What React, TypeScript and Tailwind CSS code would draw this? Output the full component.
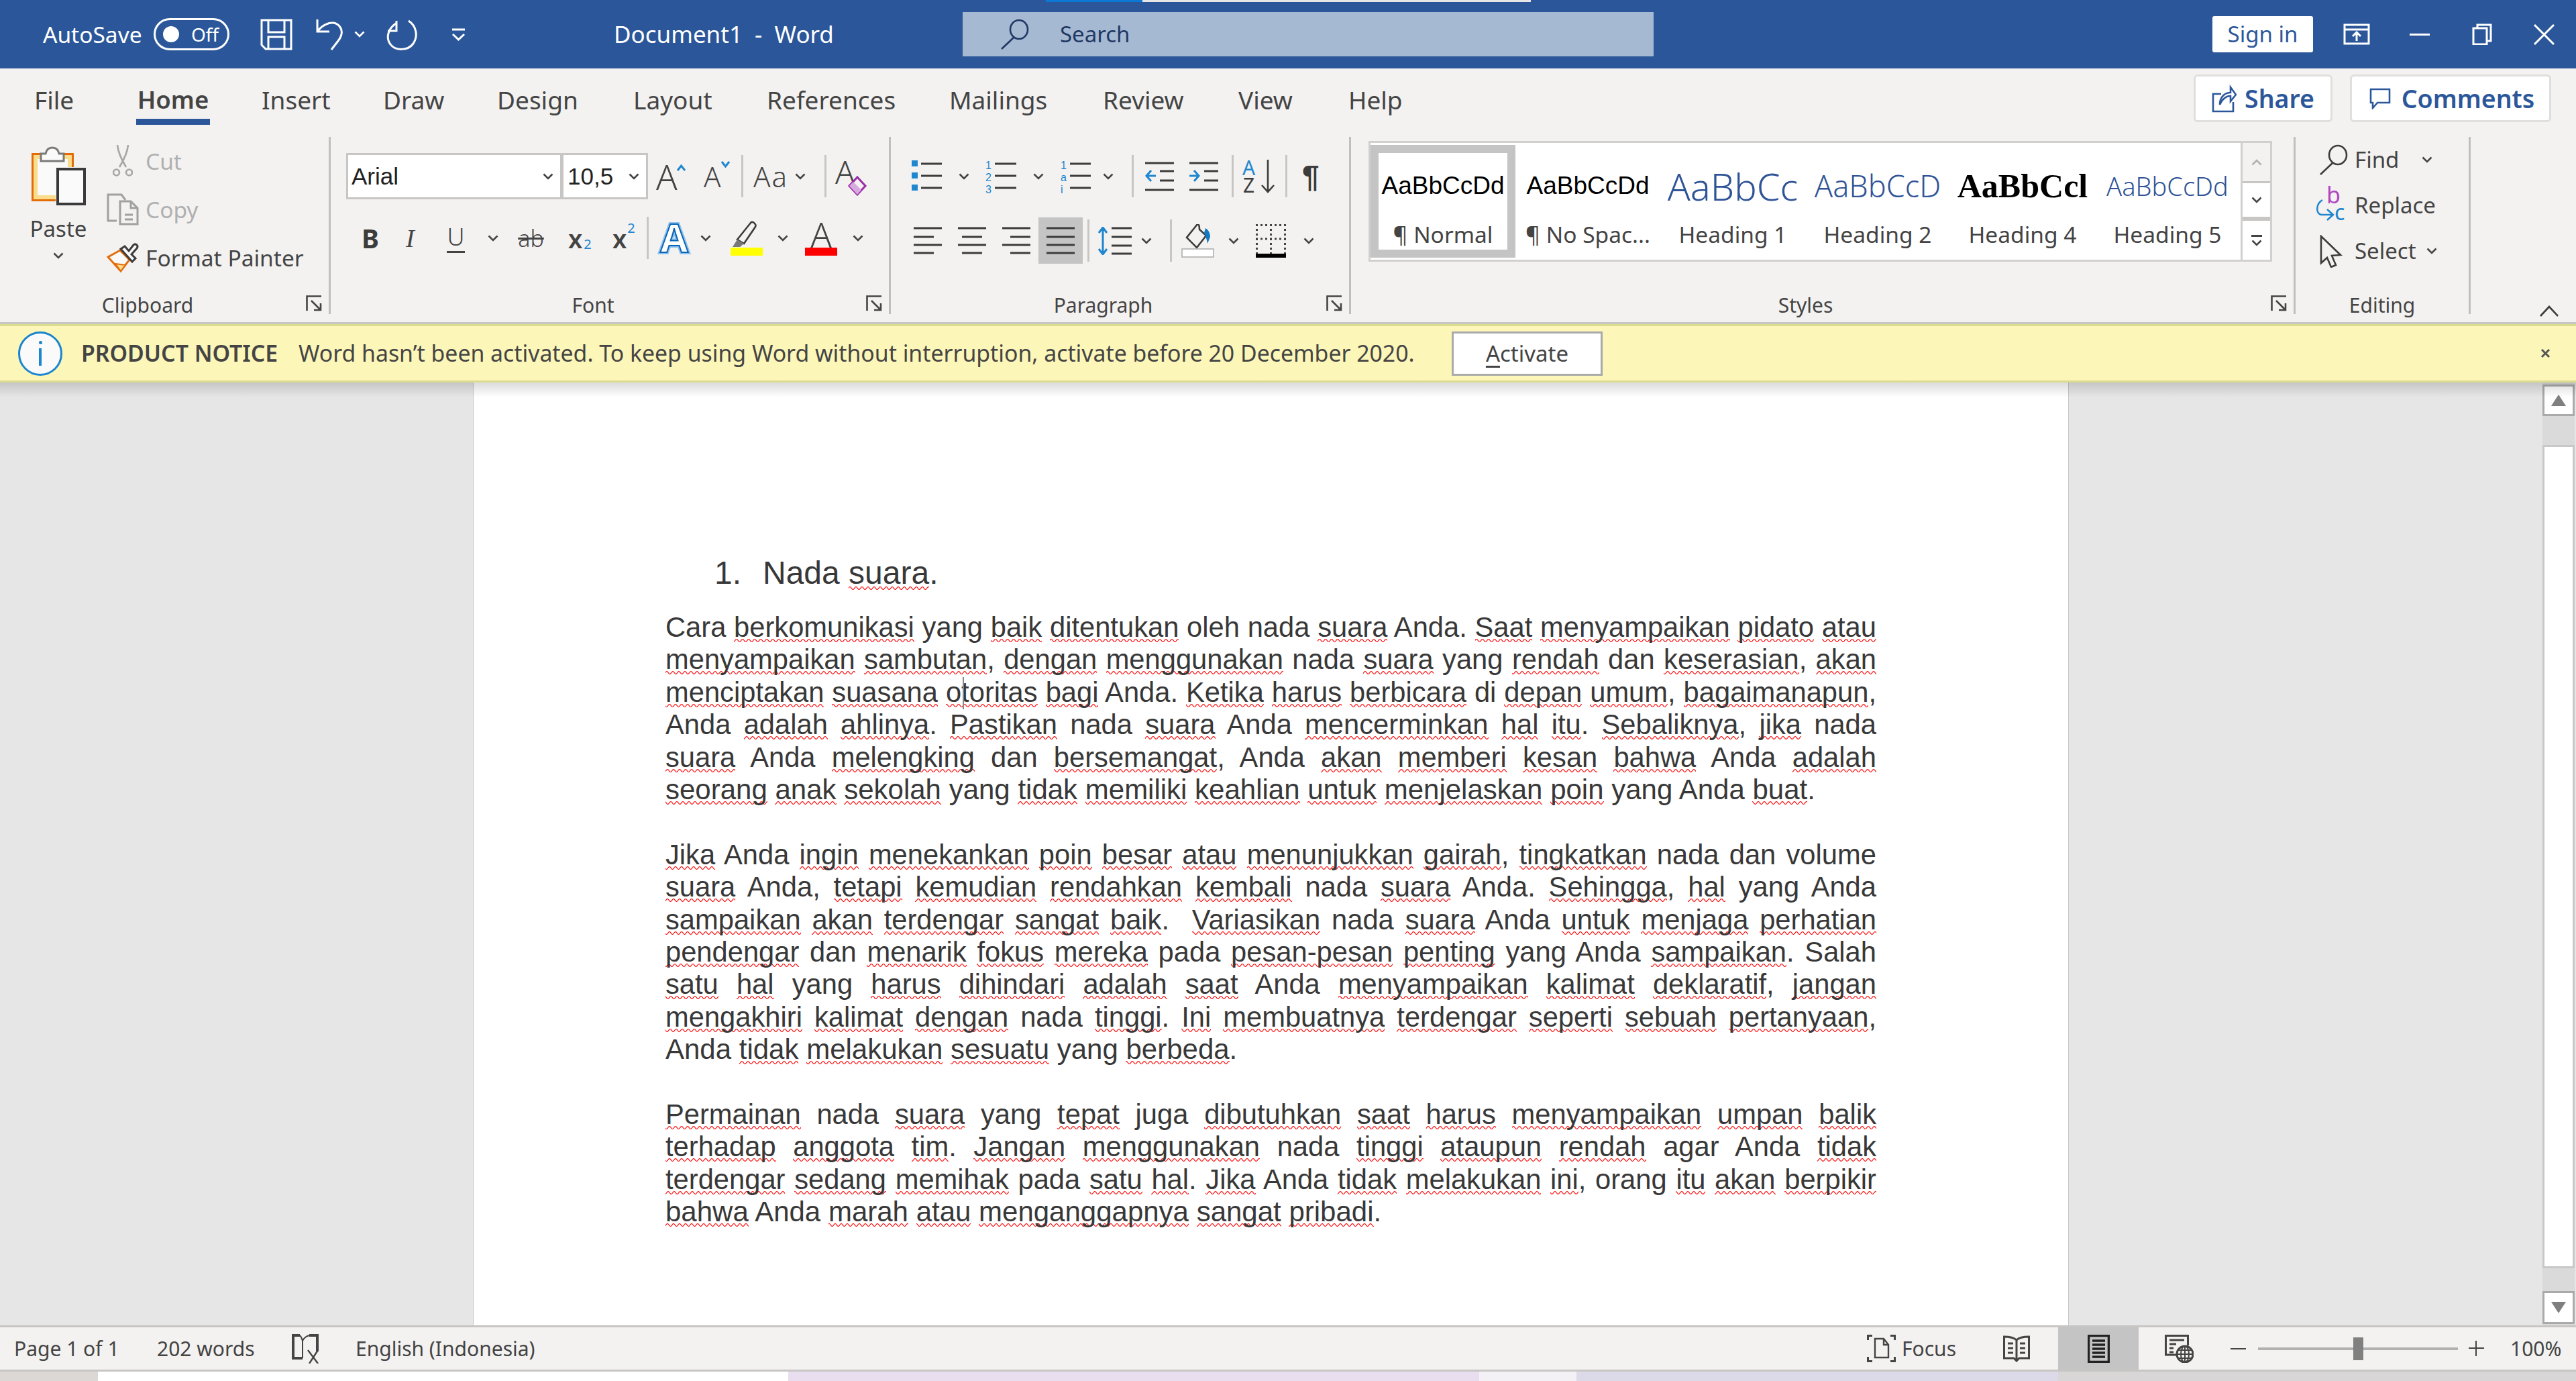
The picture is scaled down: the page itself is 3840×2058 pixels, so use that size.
import React from 'react';

const INK = '#444444';

const Chev = ({ className = '', color = INK }: { className?: string; color?: string }) => (
  <svg className={`shrink-0 ${className}`} width="16" height="10" viewBox="0 0 16 10" fill="none" stroke={color} strokeWidth="2.6">
    <path d="M1.5 1.5L8 8l6.5-6.5" />
  </svg>
);

const Sep = ({ className = '' }: { className?: string }) => <div className={`h-[63px] w-[3px] shrink-0 bg-[#c8c6c4] ${className}`} />;

const Launcher = () => (
  <svg className="absolute right-[10px] top-[4px]" width="24" height="24" viewBox="0 0 24 24" fill="none" stroke={INK} strokeWidth="2.6">
    <path d="M1.5 23V1.5H23M8 8l14 14M22 12v10H12" />
  </svg>
);

const Lens = ({ color, className = '' }: { color: string; className?: string }) => (
  <svg className={`shrink-0 ${className}`} width="45" height="46" viewBox="0 0 45 46" fill="none" stroke={color} strokeWidth="2.6">
    <ellipse cx="29" cy="16" rx="13" ry="14" />
    <path d="M21 28L3 45" />
  </svg>
);

const Group = ({ label, launcher, width, children, noPad }: { label: string; launcher?: boolean; width: string; children: React.ReactNode; noPad?: boolean }) => (
  <div className={`relative flex h-[264px] shrink-0 flex-col border-r-[3px] border-[#c0bfbd] ${width}`}>
    <div className="flex-1">{children}</div>
    <div className={`relative -mb-[6px] flex h-[38px] items-center justify-center text-[30px] leading-none ${noPad ? '' : 'pr-[50px]'}`}>
      {label}
      {launcher && <Launcher />}
    </div>
  </div>
);

const Lines = ({ kind }: { kind: 'left' | 'center' | 'right' | 'full' }) => {
  const rows = [336, 349, 361, 373].map((y, i) => {
    const short = i % 2 === 1;
    let x1 = 0;
    let x2 = 42;
    if (short && kind === 'left') x2 = 30;
    if (short && kind === 'center') { x1 = 6; x2 = 36; }
    if (short && kind === 'right') x1 = 12;
    return <path key={y} d={`M${x1} ${y - 334}H${x2}`} />;
  });
  return <svg className="shrink-0" width="42" height="42" viewBox="0 0 42 42" fill="none" stroke="#3c3c3c" strokeWidth="3">{rows}</svg>;
};

function PasteIcon() {
  return (
    <svg width="81" height="90" viewBox="0 0 81 90">
      <rect x="1.5" y="13.5" width="60" height="69" fill="#f9dc8c" stroke="#e36c09" strokeWidth="3" />
      <rect x="9" y="21" width="45" height="54" fill="#fafafa" />
      <path d="M14 24V13h7c1-5 4-9 10-9s9 4 10 9h7v11z" fill="#fafafa" stroke="#7a7a78" strokeWidth="3" />
      <rect x="36" y="33" width="45" height="57" fill="#f3f2f1" />
      <rect x="39" y="36" width="40" height="52" fill="#fafafa" stroke="#3a3a3a" strokeWidth="4" />
    </svg>
  );
}

function CutIcon() {
  return (
    <svg width="30" height="48" viewBox="0 0 30 48" fill="none" stroke="#a6a6a6" strokeWidth="2.6">
      <path d="M7 0c1 10 5 20 13 33M23 0c-1 10-5 20-13 33" />
      <circle cx="5.5" cy="41" r="4.5" />
      <circle cx="24.5" cy="41" r="4.5" />
    </svg>
  );
}

function CopyIcon() {
  return (
    <svg width="48" height="48" viewBox="0 0 48 48" fill="none" stroke="#a0a0a0" strokeWidth="3">
      <path d="M15 41H2V2h20l6 8" />
      <path d="M20 12h16l10 10v24H20z" fill="#f3f2f1" />
      <path d="M36 12v10h10M27 32h12M27 39h12" />
    </svg>
  );
}

function PainterIcon() {
  return (
    <svg width="48" height="46" viewBox="0 0 48 46" fill="none">
      <path d="M2 22l18-10 14 14-13 17z" fill="#f9f9f9" stroke="#e36c09" strokeWidth="3" />
      <path d="M13 32l15 2-7 9z" fill="#f9dc8c" stroke="#e36c09" strokeWidth="2" />
      <path d="M21 10l6-4 6 7 7-9c3-3 8 1 5 5l-8 9 6 6-5 5z" fill="#f9f9f9" stroke="#3c3c3c" strokeWidth="3" />
    </svg>
  );
}

function Bullets() {
  return (
    <svg className="shrink-0" width="45" height="47" viewBox="0 0 45 47" fill="none">
      <g fill="#2086cf"><rect x="0" y="0" width="9" height="9" /><rect x="0" y="18" width="9" height="9" /><rect x="0" y="36" width="9" height="9" /></g>
      <path d="M14 5h31M14 23h31M14 41h31" stroke="#3c3c3c" strokeWidth="3" />
    </svg>
  );
}

function Numbered({ labels, w }: { labels: string[]; w: number }) {
  return (
    <svg className="shrink-0 overflow-visible" width={w} height="56" viewBox={`0 0 ${w} 56`} fill="none">
      <g fill="#2086cf" fontFamily="Liberation Sans, sans-serif" fontSize="16">
        <text x="0" y="17">{labels[0]}</text>
        <text x="0" y="35">{labels[1]}</text>
        <text x="0" y="53">{labels[2]}</text>
      </g>
      <path d={`M14 9H${w}M14 27H${w}M14 45H${w}`} stroke="#3c3c3c" strokeWidth="3" />
    </svg>
  );
}

function Indent({ out }: { out?: boolean }) {
  return (
    <svg className="shrink-0" width="43" height="44" viewBox="0 0 43 44" fill="none" stroke="#3c3c3c" strokeWidth="3">
      <path d="M0 2h43M22 14h21M22 28h21M0 42h43" />
      {out ? <path d="M16 21H2M9 13l-7 8 7 8" stroke="#2086cf" /> : <path d="M0 21h14M7 13l7 8-7 8" stroke="#2086cf" />}
    </svg>
  );
}

function SortIcon() {
  return (
    <div className="relative h-[50px] w-[49px] shrink-0 text-[30px] leading-[24px]">
      <span className="absolute left-0 top-0 text-[#2086cf]">A</span>
      <span className="absolute left-[1px] top-[26px] text-[#3c3c3c]">Z</span>
      <svg className="absolute right-0 top-0" width="22" height="50" viewBox="0 0 22 50" fill="none" stroke="#3c3c3c" strokeWidth="2.6">
        <path d="M11 0v48M2 38l9 10 9-10" />
      </svg>
    </div>
  );
}

function SpacingIcon() {
  return (
    <svg className="shrink-0" width="50" height="42" viewBox="0 0 50 42" fill="none">
      <path d="M20 2h30M20 15h30M20 28h30M20 40h30" stroke="#3c3c3c" strokeWidth="3" />
      <path d="M7 2v38M1 9l6-8 6 8M1 33l6 8 6-8" stroke="#2086cf" strokeWidth="3" />
    </svg>
  );
}

function ShadingIcon() {
  return (
    <svg className="shrink-0" width="49" height="50" viewBox="0 0 49 50" fill="none">
      <path d="M24 0c2 0 3 3 3 8l10 9-14 18L8 20z" stroke="#3c3c3c" strokeWidth="2.6" fill="#f3f2f1" />
      <path d="M36 6c4 2 7 7 7 13l-4 10c-1-6-3-12-5-16z" fill="#1279c4" />
      <rect x="1" y="37" width="47" height="12" fill="#fff" stroke="#b0b0b0" strokeWidth="1.6" />
    </svg>
  );
}

function BordersIcon() {
  return (
    <svg className="shrink-0" width="45" height="50" viewBox="0 0 45 50" fill="none">
      <path d="M1.5 0v44M43.5 0v44M0 1.5h45M22.5 0v44M0 22h45" stroke="#444" strokeWidth="3" strokeDasharray="3 4" />
      <rect x="0" y="44" width="45" height="6" fill="#000" />
    </svg>
  );
}

function ReplaceIcon() {
  return (
    <div className="relative h-[48px] w-[45px] shrink-0 leading-[24px]">
      <span className="absolute left-[16px] top-[-4px] text-[34px] text-[#b146c2]">b</span>
      <span className="absolute left-[28px] top-[22px] text-[32px] text-[#2086cf]">c</span>
      <svg className="absolute left-0 top-[14px]" width="30" height="34" viewBox="0 0 30 34" fill="none" stroke="#2086cf" strokeWidth="2.6">
        <path d="M10 2C0 8 0 22 8 24h18M17 16l9 8-9 8" />
      </svg>
    </div>
  );
}

function SelectIcon() {
  return (
    <svg className="shrink-0" width="34" height="49" viewBox="0 0 34 49" fill="none" stroke="#3c3c3c" strokeWidth="2.6">
      <path d="M2 2v40l9-8 6 14 7-3-6-14 13-1z" />
    </svg>
  );
}

// x positions read off the reference: each tab has its own cell
const RibbonTabs = [
  { name: 'Insert', cell: 'ml-[77px] w-[99px]' },
  { name: 'Draw', cell: 'ml-[82px] w-[89px]' },
  { name: 'Design', cell: 'ml-[81px] w-[121px]' },
  { name: 'Layout', cell: 'ml-[82px] w-[116px]' },
  { name: 'References', cell: 'ml-[83px] w-[191px]' },
  { name: 'Mailings', cell: 'ml-[81px] w-[148px]' },
  { name: 'Review', cell: 'ml-[81px] w-[122px]' },
  { name: 'View', cell: 'ml-[80px] w-[85px]' },
  { name: 'Help', cell: 'ml-[79px] w-[81px]' },
];

function StylePreview({ label, className, text, selected }: { label: string; className: string; text: string; selected?: boolean }) {
  return (
    <div className={`flex h-[168px] w-[216px] shrink-0 flex-col items-center border-[12px] ${selected ? 'border-[#c4c4c4]' : 'border-transparent'}`}>
      <div className="flex h-[98px] w-[190px] items-center justify-center whitespace-nowrap">
        <span className={className}>{text}</span>
      </div>
      <div className="whitespace-nowrap text-[33.500px] leading-[46px]">{label}</div>
    </div>
  );
}

const SPELL_OK = new Set(['Cara', 'yang', 'oleh', 'nada', 'Anda', 'dan', 'di', 'orang', 'volume', 'Salah', 'juga', 'agar', 'pada', 'Nada']);

function Words({ text }: { text: string }) {
  const parts = text.split(/([A-Za-z-]+)/);
  return (
    <>
      {parts.map((p, i) =>
        /^[A-Za-z-]+$/.test(p) && !SPELL_OK.has(p) ? (
          <span key={i} className="bg-[url(data:image/svg+xml,%3Csvg%20xmlns=%27http://www.w3.org/2000/svg%27%20width=%279%27%20height=%277%27%3E%3Cpath%20d=%27M0%201.5C2%201.5%202.5%205.5%204.5%205.5S7%201.5%209%201.5%27%20fill=%27none%27%20stroke=%27%23f00%27%20stroke-width=%271.2%27/%3E%3C/svg%3E)] bg-[length:9px_7px] bg-bottom bg-repeat-x">{p}</span>
        ) : (
          <span key={i}>{p}</span>
        ),
      )}
    </>
  );
}

const PARAS = [
  [
    'Cara berkomunikasi yang baik ditentukan oleh nada suara Anda. Saat menyampaikan pidato atau',
    'menyampaikan sambutan, dengan menggunakan nada suara yang rendah dan keserasian, akan',
    'menciptakan suasana otoritas bagi Anda. Ketika harus berbicara di depan umum, bagaimanapun,',
    'Anda adalah ahlinya. Pastikan nada suara Anda mencerminkan hal itu. Sebaliknya, jika nada',
    'suara Anda melengking dan bersemangat, Anda akan memberi kesan bahwa Anda adalah',
    'seorang anak sekolah yang tidak memiliki keahlian untuk menjelaskan poin yang Anda buat.',
  ],
  [
    'Jika Anda ingin menekankan poin besar atau menunjukkan gairah, tingkatkan nada dan volume',
    'suara Anda, tetapi kemudian rendahkan kembali nada suara Anda. Sehingga, hal yang Anda',
    'sampaikan akan terdengar sangat baik.\u00a0 Variasikan nada suara Anda untuk menjaga perhatian',
    'pendengar dan menarik fokus mereka pada pesan-pesan penting yang Anda sampaikan. Salah',
    'satu hal yang harus dihindari adalah saat Anda menyampaikan kalimat deklaratif, jangan',
    'mengakhiri kalimat dengan nada tinggi. Ini membuatnya terdengar seperti sebuah pertanyaan,',
    'Anda tidak melakukan sesuatu yang berbeda.',
  ],
  [
    'Permainan nada suara yang tepat juga dibutuhkan saat harus menyampaikan umpan balik',
    'terhadap anggota tim. Jangan menggunakan nada tinggi ataupun rendah agar Anda tidak',
    'terdengar sedang memihak pada satu hal. Jika Anda tidak melakukan ini, orang itu akan berpikir',
    'bahwa Anda marah atau menganggapnya sangat pribadi.',
  ],
];

export default function App() {
  return (
    <div className="flex h-screen w-screen flex-col overflow-hidden bg-[#f3f2f1] font-['Noto_Sans',sans-serif] text-[#444444]">
      {/* title bar */}
      <header className="relative flex h-[102px] shrink-0 items-center whitespace-nowrap bg-[#2b579a] text-white">
        <div className="absolute left-[1559px] top-0 flex h-[3px] w-[723px]">
          <div className="w-[144px] bg-[#0a78d4]" />
          <div className="flex-1 bg-[#e6e6e6]" />
        </div>
        <span className="ml-[64px] w-[147px] text-[33.500px]">AutoSave</span>
        <div className="ml-[18px] flex h-[48px] w-[113px] items-center rounded-full border-[3px] border-white pl-[11px]">
          <div className="h-[24px] w-[24px] rounded-full bg-white" />
          <span className="ml-[18px] text-[28px] leading-none">Off</span>
        </div>
        <svg className="ml-[46px] shrink-0" width="48" height="47" viewBox="0 0 48 47" fill="none" stroke="#fff" strokeWidth="3">
          <path d="M2 2h44v43H8l-6-6zM12 2v18h24V2M12 45V27h24v18" />
        </svg>
        <svg className="ml-[34px] shrink-0" width="45" height="48" viewBox="0 0 45 48" fill="none" stroke="#fff" strokeWidth="3">
          <path d="M3 2v18h18M3 20C12 8 28 2 36 12c6 7 3 16-2 22L24 47" />
        </svg>
        <Chev color="#fff" className="ml-[13px]" />
        <svg className="ml-[31px] shrink-0" width="50" height="48" viewBox="0 0 50 48" fill="none" stroke="#fff" strokeWidth="3">
          <path d="M16 4v15H3M15 8C3 16 0 30 7 39c7 10 26 10 34-1 8-12 4-27-7-34" />
        </svg>
        <svg className="ml-[47px] shrink-0" width="23" height="19" viewBox="0 0 23 19" fill="none" stroke="#fff" strokeWidth="3">
          <path d="M2 2h19M3 9l8.500 8L20 9M2 2" />
        </svg>
        <span className="ml-[220px] w-[325px] text-[35px]">Document1&nbsp; -&nbsp; Word</span>
        <div className="ml-[195px] flex h-[66px] w-[1030px] items-center bg-[#a6b9d2] pl-[55px] text-[#1f3864]">
          <Lens color="#1f3864" />
          <span className="ml-[45px] text-[33px]">Search</span>
        </div>
        <div className="ml-[833px] flex h-[54px] w-[150px] items-center justify-center rounded-[3px] bg-white text-[33px] text-[#2b579a]">Sign in</div>
        <svg className="ml-[45px] shrink-0" width="40" height="32" viewBox="0 0 40 32" fill="none" stroke="#fff" strokeWidth="3">
          <path d="M2 2h36v28H2zM2 9h36M20 26V13M14 19l6-6 6 6" />
        </svg>
        <div className="ml-[59px] h-[3px] w-[30px] shrink-0 bg-white" />
        <svg className="ml-[63px] shrink-0" width="30" height="32" viewBox="0 0 30 32" fill="none" stroke="#fff" strokeWidth="3">
          <path d="M8 6V2h20v24h-6M2 7h20v24H2z" />
        </svg>
        <svg className="ml-[62px] shrink-0" width="31" height="31" viewBox="0 0 31 31" fill="none" stroke="#fff" strokeWidth="3">
          <path d="M1 1l29 29M30 1L1 30" />
        </svg>
      </header>

      {/* tab row */}
      <nav className="flex h-[98px] shrink-0 items-start whitespace-nowrap pl-[51px] text-[37px] leading-none">
        <div className="flex h-[84px] w-[56px] items-center border-b-[9px] border-transparent pt-[18px]">File</div>
        <div className="ml-[96px] flex h-[84px] w-[110px] items-center justify-center border-b-[9px] border-[#2b579a] pt-[18px] text-[36.500px] font-semibold">Home</div>
        {RibbonTabs.map((t) => (
          <div key={t.name} className={`flex h-[84px] items-center border-b-[9px] border-transparent pt-[18px] ${t.cell}`}>{t.name}</div>
        ))}
        <div className="ml-auto mt-[9px] flex gap-[26px] pr-[37px] text-[37.500px] font-semibold text-[#2b579a]">
          <div className="flex h-[71px] w-[207px] items-center justify-center rounded-[6px] border-[3px] border-[#e1dfdd] bg-white">
            <svg className="mr-[12px]" width="37" height="42" viewBox="0 0 37 42" fill="none" stroke="#2b579a" strokeWidth="2.6">
              <path d="M14 14H2v26h30V26M12 30C12 18 20 12 28 12V4l8 11-8 10v-8c-6 0-12 4-16 13z" />
            </svg>
            Share
          </div>
          <div className="flex h-[71px] w-[300px] items-center justify-center rounded-[6px] border-[3px] border-[#e1dfdd] bg-white pl-[4px]">
            <svg className="mr-[16px]" width="32" height="32" viewBox="0 0 32 32" fill="none" stroke="#2b579a" strokeWidth="2.6">
              <path d="M2 2h28v20H12l-7 8v-8H2z" />
            </svg>
            Comments
          </div>
        </div>
      </nav>

      {/* ribbon */}
      <section className="flex h-[280px] shrink-0 whitespace-nowrap pt-[4px]">
        <Group label="Clipboard" launcher width="w-[493px]">
          <div className="flex">
            <div className="ml-[12px] flex w-[150px] flex-col items-center pt-[12px] pr-[0px]">
              <PasteIcon />
              <div className="mt-[13px] text-[33px] leading-[44px]">Paste</div>
              <Chev className="mt-[13px]" />
            </div>
            <div className="flex flex-col text-[33.500px]">
              <div className="flex h-[72px] items-center text-[#b0b0b0]">
                <div className="flex w-[48px] -translate-x-[3px] justify-center"><CutIcon /></div>
                <span className="ml-[7px]">Cut</span>
              </div>
              <div className="flex h-[72px] items-center text-[#b0b0b0]">
                <div className="flex w-[48px] -translate-x-[3px] justify-center"><CopyIcon /></div>
                <span className="ml-[7px]">Copy</span>
              </div>
              <div className="flex h-[72px] items-center">
                <div className="flex w-[48px] -translate-x-[3px] justify-center"><PainterIcon /></div>
                <span className="ml-[7px]">Format Painter</span>
              </div>
            </div>
          </div>
        </Group>

        <Group label="Font" launcher width="w-[835px]">
          <div className="flex h-[69px] items-center mt-[24px]">
            <div className="ml-[23px] flex h-[69px] w-[450px] border-[3px] border-[#c8c6c4] bg-white font-['Liberation_Sans',sans-serif] text-[35px] leading-none text-[#222]">
              <div className="flex w-[316px] items-center justify-between pl-[5px] pr-[10px]">Arial<Chev /></div>
              <div className="flex flex-1 items-center justify-between border-l-[5px] border-[#c8c6c4] pl-[6px] pr-[10px]">10,5<Chev /></div>
            </div>
            <div className="relative ml-[12px] flex w-[44px] shrink-0 font-light text-[52px] leading-none">A
              <svg className="absolute right-0 top-[8px]" width="13" height="10" viewBox="0 0 13 10" fill="none" stroke="#2086cf" strokeWidth="3"><path d="M1 9l5.500-7L12 9" /></svg>
            </div>
            <div className="relative ml-[27px] flex w-[39px] shrink-0 font-light text-[42px] leading-none">A
              <svg className="absolute right-0 top-[-2px]" width="13" height="10" viewBox="0 0 13 10" fill="none" stroke="#2086cf" strokeWidth="3"><path d="M1 1l5.500 7L12 1" /></svg>
            </div>
            <Sep className="ml-[17px]" />
            <span className="ml-[15px] w-[47px] shrink-0 font-light text-[42px] leading-none tracking-[2px]">Aa</span>
            <Chev className="ml-[15px]" />
            <Sep className="ml-[28px]" />
            <div className="relative ml-[13px] h-[50px] w-[48px] shrink-0 font-light text-[48px] leading-none">
              <span className="absolute left-0 top-[-6px]">A</span>
              <svg className="absolute bottom-[-4px] right-0" width="30" height="30" viewBox="0 0 30 30" fill="none">
                <path d="M15 2l12 13-12 13L3 15z" fill="#f3f2f1" stroke="#9a2ea8" strokeWidth="3" />
                <path d="M9 9l12 12-6 7-12-13z" fill="#d8a8e0" />
              </svg>
            </div>
          </div>
          <div className="mt-[23px] flex h-[69px] items-center leading-none">
            <span className="ml-[46px] w-[21px] shrink-0 text-[39px] font-bold text-[#3c3c3c]">B</span>
            <span className="ml-[45px] w-[20px] shrink-0 font-['Liberation_Serif',serif] text-[38px] italic">I</span>
            <span className="ml-[41px] w-[27px] shrink-0 border-b-[3px] border-[#444] text-center text-[36px] font-light leading-[42px]">U</span>
            <Chev className="ml-[34px]" />
            <span className="ml-[25px] w-[47px] shrink-0 text-center text-[34px] font-light line-through">ab</span>
            <span className="ml-[32px] flex w-[33px] shrink-0 items-end text-[38px] font-semibold leading-none">x<span className="ml-[2px] text-[20px] font-normal text-[#2086cf]">2</span></span>
            <span className="ml-[33px] flex w-[33px] shrink-0 items-start text-[38px] font-semibold leading-none">x<span className="ml-[1px] -mt-[6px] text-[20px] font-normal text-[#2086cf]">2</span></span>
            <Sep className="ml-[18px]" />
            <svg className="ml-[14px] shrink-0 overflow-visible" width="48" height="50" viewBox="0 0 48 50">
              <text x="24" y="46" textAnchor="middle" fontFamily="Noto Sans, sans-serif" fontSize="60" fontWeight="700" fill="#fff" stroke="#8cc3ee" strokeWidth="6" paintOrder="stroke">A</text>
              <text x="24" y="46" textAnchor="middle" fontFamily="Noto Sans, sans-serif" fontSize="60" fontWeight="700" fill="#fff" stroke="#0a64b4" strokeWidth="2">A</text>
            </svg>
            <Chev className="ml-[15px]" />
            <svg className="ml-[29px] shrink-0" width="48" height="52" viewBox="0 0 48 52" fill="none">
              <path d="M10 28L30 3c3-3 9 2 7 6L20 34z" stroke="#3c3c3c" strokeWidth="2.6" fill="#f3f2f1" />
              <path d="M10 28l10 6-6 5H3z" fill="#777" />
              <rect x="0" y="40" width="48" height="12" fill="#ffff00" />
            </svg>
            <Chev className="ml-[22px]" />
            <div className="ml-[25px] flex w-[48px] shrink-0 flex-col items-center text-[52px] font-light leading-[40px]">
              <span>A</span>
              <div className="mt-[0px] h-[12px] w-[48px] bg-[#ff0000]" />
            </div>
            <Chev className="ml-[23px]" />
          </div>
        </Group>

        <Group label="Paragraph" launcher width="w-[686px]">
          <div className="mt-[24px] flex h-[69px] items-center">
            <div className="ml-[31px]"><Bullets /></div>
            <Chev className="ml-[25px]" />
            <div className="ml-[24px]"><Numbered labels={['1', '2', '3']} w={46} /></div>
            <Chev className="ml-[25px]" />
            <div className="ml-[25px]"><Numbered labels={['1', 'a', 'i']} w={45} /></div>
            <Chev className="ml-[18px]" />
            <Sep className="ml-[27px]" />
            <div className="ml-[17px]"><Indent out /></div>
            <div className="ml-[23px]"><Indent /></div>
            <Sep className="ml-[20px]" />
            <div className="ml-[13px]"><SortIcon /></div>
            <Sep className="ml-[15px]" />
            <span className="ml-[22px] w-[30px] shrink-0 font-['Liberation_Sans',sans-serif] text-[46px] font-bold leading-none text-[#3c3c3c]">¶</span>
          </div>
          <div className="mt-[27px] flex h-[69px] items-center">
            <div className="ml-[34px]"><Lines kind="left" /></div>
            <div className="ml-[24px]"><Lines kind="center" /></div>
            <div className="ml-[24px]"><Lines kind="right" /></div>
            <div className="ml-[12px] flex h-[69px] w-[66px] shrink-0 items-center justify-center bg-[#c4c4c4]"><Lines kind="full" /></div>
            <Sep className="ml-[7px]" />
            <div className="ml-[13px]"><SpacingIcon /></div>
            <Chev className="ml-[14px]" />
            <Sep className="ml-[27px]" />
            <div className="ml-[14px]"><ShadingIcon /></div>
            <Chev className="ml-[21px]" />
            <div className="ml-[25px]"><BordersIcon /></div>
            <Chev className="ml-[26px]" />
          </div>
        </Group>

        <Group label="Styles" launcher width="w-[1408px]">
          <div className="ml-[26px] mt-[6px] flex h-[180px] w-[1347px] items-center border-[3px] border-[#d2d0ce] bg-white">
            <StylePreview selected label="¶ Normal" text="AaBbCcDd" className="font-['Liberation_Sans',sans-serif] text-[37px] text-black" />
            <StylePreview label="¶ No Spac..." text="AaBbCcDd" className="font-['Liberation_Sans',sans-serif] text-[37px] text-black" />
            <StylePreview label="Heading 1" text="AaBbCc" className="font-light text-[56px] text-[#2f5496]" />
            <StylePreview label="Heading 2" text="AaBbCcD" className="font-light text-[45px] text-[#2f5496]" />
            <StylePreview label="Heading 4" text="AaBbCcl" className="font-['Liberation_Serif',serif] text-[50px] font-bold text-black" />
            <StylePreview label="Heading 5" text="AaBbCcDd" className="font-light text-[38px] text-[#2f5496]" />
            <div className="ml-[1px] flex h-full w-[44px] shrink-0 flex-col border-l-[3px] border-[#d2d0ce] bg-[#f3f2f1]">
              <div className="flex h-[60px] items-center justify-center border-b-[3px] border-[#c8c6c4]">
                <Chev color="#b0b0b0" className="rotate-180" />
              </div>
              <div className="flex h-[56px] items-center justify-center border-b-[6px] border-[#c8c6c4] bg-white"><Chev /></div>
              <div className="flex flex-1 flex-col items-center justify-center gap-[4px] bg-white">
                <div className="h-[3px] w-[16px] bg-[#444]" />
                <Chev />
              </div>
            </div>
          </div>
        </Group>

        <Group label="Editing" noPad width="w-[261px]">
          <div className="flex h-[68px] items-center text-[33px]">
            <div className="ml-[34px]"><Lens color="#3c3c3c" /></div>
            <span className="ml-[9px] w-[67px]">Find</span>
            <Chev className="ml-[33px]" />
          </div>
          <div className="flex h-[68px] items-center text-[33px]">
            <div className="ml-[30px]"><ReplaceIcon /></div>
            <span className="ml-[13px]">Replace</span>
          </div>
          <div className="flex h-[68px] items-center text-[33px]">
            <div className="ml-[36px]"><SelectIcon /></div>
            <span className="ml-[18px] w-[95px]">Select</span>
            <Chev className="ml-[12px]" />
          </div>
        </Group>

        <div className="flex flex-1 items-end justify-end pb-[8px] pr-[26px]">
          <svg width="28" height="17" viewBox="0 0 28 17" fill="none" stroke="#3c3c3c" strokeWidth="2.6"><path d="M1 16L14 2l13 14" /></svg>
        </div>
      </section>

      <div className="h-[3px] shrink-0 bg-[#c8c6c4]" />

      {/* notice bar */}
      <div className="flex h-[87px] shrink-0 items-center whitespace-nowrap border-y-[3px] border-[#dcdc8f] bg-[#fcf6b8] text-[33.800px]">
        <div className="ml-[27px] flex h-[66px] w-[66px] shrink-0 flex-col items-center justify-center rounded-full border-[3px] border-[#1a86d0] bg-[#fafafa]">
          <div className="h-[5px] w-[5px] rounded-full bg-[#1a86d0]" />
          <div className="mt-[6px] h-[26px] w-[4px] bg-[#1a86d0]" />
        </div>
        <span className="ml-[28px] w-[296px] font-semibold">PRODUCT NOTICE</span>
        <span className="ml-[28px] w-[1663px]">Word hasn’t been activated. To keep using Word without interruption, activate before 20 December 2020.</span>
        <div className="ml-[56px] flex h-[66px] w-[225px] items-center justify-center border-[3px] border-[#aaaaaa] bg-white text-[33px]">
          <span><span className="underline decoration-[#444444] underline-offset-[6px]">A</span>ctivate</span>
        </div>
        <svg className="ml-[1398px] shrink-0" width="15" height="15" viewBox="0 0 15 15" fill="none" stroke="#555" strokeWidth="3"><path d="M2 2l11 11M13 2L2 13" /></svg>
      </div>

      {/* document area */}
      <main className="relative flex min-h-0 flex-1 overflow-hidden bg-[#e6e6e6]">
        <div className="pointer-events-none absolute inset-x-0 top-0 z-10 h-[22px] bg-gradient-to-b from-[#00000024] to-transparent" />
        <div className="ml-[705px] h-full w-[2379px] shrink-0 border-x border-[#c8c8c8] bg-white pl-[286px] pr-[286px] pt-[254px] font-['Liberation_Sans',sans-serif] text-[42px] leading-[48.4px] text-[#383838]">
          <div className="mb-[27px] flex text-[48px] leading-[60px]">
            <span className="ml-[73px] w-[72px]">1.</span>
            <span><Words text="Nada suara." /></span>
          </div>
          {PARAS.map((para, i) => (
            <div key={i} className="mb-[48.4px]">
              {para.map((line, j) => (
                <div key={j} className={`whitespace-nowrap ${j === para.length - 1 ? 'text-left' : 'text-justify text-[41.700px] [text-align-last:justify]'}`}>
                  <Words text={line} />
                </div>
              ))}
            </div>
          ))}
          <div className="absolute left-[1435px] top-[439px] h-[48px] w-[2px] bg-[#888888]" />
        </div>
        <div className="ml-[706px] flex h-full w-[48px] shrink-0 flex-col bg-[#dadada] pb-[2px] pt-[3px]">
          <div className="flex h-[47px] items-center justify-center border-[3px] border-[#aaaaaa] bg-white">
            <div className="h-0 w-0 border-x-[11px] border-b-[17px] border-x-transparent border-b-[#7f7f7f]" />
          </div>
          <div className="mt-[43px] h-[1227px] border-[3px] border-[#c8c8c8] bg-white" />
          <div className="mt-auto flex h-[49px] items-center justify-center border-[3px] border-[#aaaaaa] bg-white">
            <div className="h-0 w-0 border-x-[11px] border-t-[17px] border-x-transparent border-t-[#7f7f7f]" />
          </div>
        </div>
      </main>

      {/* status bar */}
      <footer className="flex h-[69px] shrink-0 items-center whitespace-nowrap border-y-[3px] border-[#c8c6c4] text-[30px]">
        <span className="ml-[21px] w-[157px]">Page 1 of 1</span>
        <span className="ml-[56px] w-[146px]">202 words</span>
        <svg className="ml-[55px] shrink-0" width="42" height="44" viewBox="0 0 42 44" fill="none" stroke="#444" strokeWidth="3">
          <path d="M16 36H2V2h10M26 2h12v24" strokeWidth="4" />
          <path d="M12 2c3 3 3 6 4 8 1-2 3-6 10-8M16 10v26" strokeWidth="2" />
          <path d="M24 24l15 20M39 24L26 44" strokeWidth="2.4" />
        </svg>
        <span className="ml-[53px]">English (Indonesia)</span>
        <div className="ml-auto flex h-full items-center">
          <svg className="shrink-0" width="43" height="41" viewBox="0 0 43 41" fill="none" stroke="#444" strokeWidth="3">
            <path d="M1.500 8V1.500H8M35 1.500h6.500V8M1.500 33v6.500H8M35 39.500h6.500V33" />
            <path d="M12 6h13l7 9v19H12zM25 6v9h7" strokeWidth="2.4" />
          </svg>
          <span className="ml-[9px] w-[80px]">Focus</span>
          <svg className="ml-[71px] shrink-0" width="40" height="40" viewBox="0 0 40 40" fill="none" stroke="#444" strokeWidth="3">
            <path d="M1.500 2c7 0 14 1 18.500 5 4-4 11-5 18.500-5v32H24l-4 4-4-4H1.500zM20 7v30" />
            <path d="M7 12h8M7 19h8M7 26h8M25 12h8M25 19h8M25 26h8" />
          </svg>
          <div className="ml-[42px] flex h-full w-[120px] items-center justify-center bg-[#c4c4c4]">
            <svg width="33" height="42" viewBox="0 0 33 42" fill="none" stroke="#222" strokeWidth="3">
              <path d="M1.500 1.500h30v39h-30zM7 9h19M7 15h19M7 21h19M7 27h19M7 33h19" strokeWidth="3.600" />
            </svg>
          </div>
          <svg className="ml-[39px] shrink-0" width="43" height="42" viewBox="0 0 43 42" fill="none" stroke="#444" strokeWidth="3">
            <path d="M20 30H1.500V1.500h33V16M7 8h22M7 14h10M7 20h6M7 26h6" />
            <circle cx="30" cy="29" r="12" fill="#f3f2f1" />
            <path d="M30 17v24M18 29h24M20 23h20M20 35h20" strokeWidth="2" />
            <ellipse cx="30" cy="29" rx="6" ry="12" strokeWidth="2" />
          </svg>
          <div className="ml-[55px] h-[2px] w-[23px] bg-[#444]" />
          <div className="relative ml-[18px] h-[4px] w-[298px] bg-[#b0b0b0]">
            <div className="absolute left-[142px] top-[-15px] h-[34px] w-[15px] bg-[#808080]" />
          </div>
          <div className="relative ml-[16px] h-[23px] w-[23px]">
            <div className="absolute left-0 top-[10px] h-[2px] w-[23px] bg-[#444]" />
            <div className="absolute left-[10px] top-0 h-[23px] w-[2px] bg-[#444]" />
          </div>
          <span className="ml-[39px] mr-[22px] w-[76px]">100%</span>
        </div>
      </footer>

      {/* desktop strip behind the window */}
      <div className="flex h-[14px] shrink-0">
        <div className="w-[146px] bg-[#dbd8d5]" />
        <div className="w-[1029px] bg-white" />
        <div className="w-[1030px] bg-[#e8deef]" />
        <div className="w-[145px] bg-[#f4f1f6]" />
        <div className="w-[718px] bg-[#dcd9e8]" />
        <div className="flex-1 bg-[#d8d6d6]" />
      </div>
    </div>
  );
}
